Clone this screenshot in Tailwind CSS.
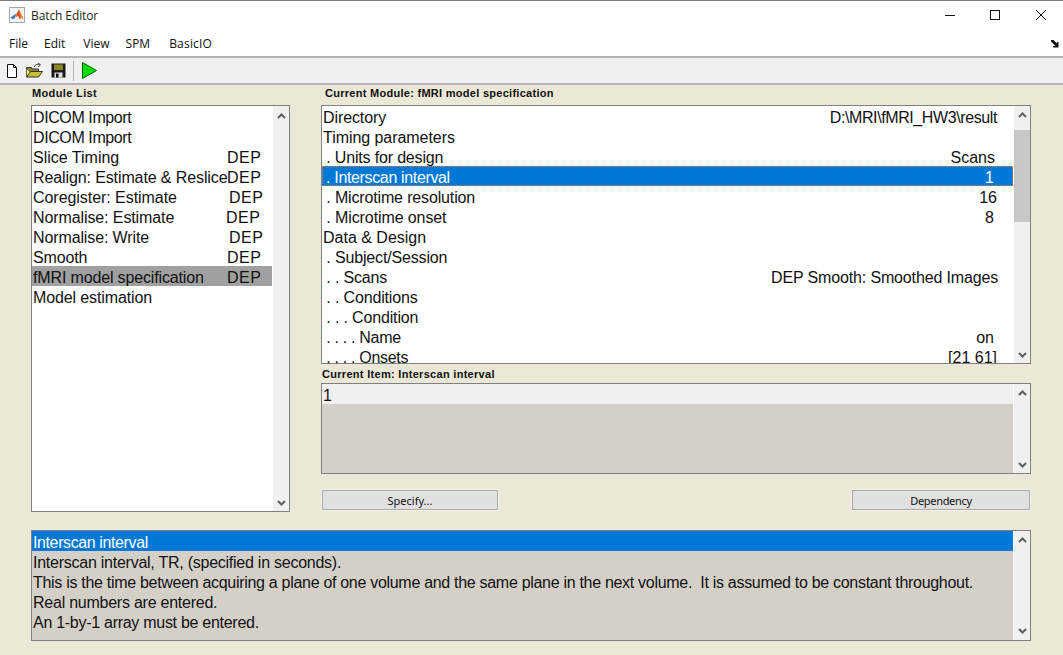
<!DOCTYPE html>
<html><head><meta charset="utf-8"><title>Batch Editor</title>
<script src="https://cdn.jsdelivr.net/npm/@tailwindcss/browser@4"></script></head>
<body class="w-[1063px] h-[655px] overflow-hidden bg-[#ebe8d8] font-['Liberation_Sans',sans-serif] text-black">
<div class="flex flex-col h-[655px]">
  <!-- title bar -->
  <div class="h-[32px] bg-white border-t border-[#7a7a7a] flex items-center shrink-0 pb-[3px]">
    <svg class="ml-[9px] w-[16px] h-[16px]" viewBox="0 0 16 16"><rect x=".5" y=".5" width="15" height="15" fill="#f4f4f4" stroke="#a8a8a8"/><path d="M1.5 10.5L5 8l2.5-1.5L6 11l-2 1.5z" fill="#3f7fb8"/><path d="M7.5 6.5L10 2.5l1.5 3L14.5 12l-2.5-1.5-1 2-2-3.5-2 1z" fill="#d9531e"/><path d="M10 2.5l1.500 3L14.500 12 12 10.500z" fill="#f0a030"/></svg>
    <span class="ml-[6px] mt-[2px] text-[12px] font-['Open_Sans',sans-serif] text-[#222] tracking-[-0.1px]">Batch Editor</span>
    <div class="ml-auto flex items-center h-full">
      <svg class="w-[12px] h-[12px] mr-[33px]" viewBox="0 0 12 12"><path d="M1 6.500h10" stroke="#111" stroke-width="1"/></svg>
      <svg class="w-[12px] h-[12px] mr-[34px]" viewBox="0 0 12 12"><rect x="1.500" y="1.500" width="9" height="9" fill="none" stroke="#111"/></svg>
      <svg class="w-[12px] h-[12px] mr-[16px]" viewBox="0 0 12 12"><path d="M1 1l10 10M11 1L1 11" stroke="#111" stroke-width="1"/></svg>
    </div>
  </div>
  <!-- menu -->
  <div class="h-[26px] bg-white border-b-2 border-[#b4b4b4] flex items-center shrink-0 text-[12px] font-['Open_Sans',sans-serif] text-[#111]">
    <span class="ml-[9px]">File</span><span class="ml-[16px]">Edit</span><span class="ml-[18px]">View</span><span class="ml-[16px]">SPM</span><span class="ml-[19px] tracking-[0.2px]">BasicIO</span>
    <svg class="ml-auto mr-[3px] w-[9px] h-[8px]" viewBox="0 0 9 8"><path d="M0 0h2.500l3.500 3.500V2h1.500v5.500H2V6h2.500L0 1.500z" fill="#111"/></svg>
  </div>
  <!-- toolbar -->
  <div class="h-[27px] bg-[#f0f0f0] border-b-2 border-[#b4b4b4] flex items-center shrink-0">
    <svg class="ml-[6px] w-[12px] h-[14px]" viewBox="0 0 12 14"><path d="M1.500.5h6l3 3v10h-9z" fill="#fff" stroke="#111"/><path d="M7.500.5v3h3" fill="none" stroke="#111"/></svg>
    <svg class="ml-[8px] w-[17px] h-[15px]" viewBox="0 0 17 15"><path d="M.5 4.500h5l1 1.500h6v7.500H.5z" fill="#8a8a20" stroke="#333"/><path d="M.5 5.500l4 4L.5 13.500z" fill="#f8f08a" stroke="#333" stroke-width=".5"/><path d="M.5 14l4-5.500h12l-4 5.500z" fill="#c8c030" stroke="#333"/><path d="M8 4C9 1.500 11 1 13.500 1.500M12 0l2.500 1.700L12 4" fill="none" stroke="#444"/></svg>
    <svg class="ml-[8px] w-[15px] h-[15px]" viewBox="0 0 15 15"><rect x=".5" y=".5" width="14" height="14" fill="#1a1a1a"/><rect x="3" y="1.500" width="9" height="5.500" fill="#8a8a1e"/><rect x="3.500" y="9.500" width="8" height="5" fill="#e0e0e0"/><rect x="5" y="10.500" width="2.500" height="4" fill="#111"/></svg>
    <div class="ml-[7px] w-px h-[20px] bg-[#b8b8b8]"></div>
    <svg class="ml-[8px] w-[15px] h-[17px]" viewBox="0 0 15 17"><path d="M.5.500L14.500 8.500.5 16.500z" fill="#00e000" stroke="#006000"/></svg>
  </div>
  <!-- body -->
  <div class="flex-1 pl-[31px] flex flex-col">
    <div class="flex h-[428px]">
      <!-- left column -->
      <div class="w-[259px] shrink-0">
        <div class="h-[20px] pl-[1px] pt-[2px] text-[11px] leading-[12px] font-bold text-[#111] tracking-[0.36px]">Module List</div>
        <div class="h-[407px] flex bg-white border border-[#808080]">
          <div class="flex-1 text-[16px] leading-[24px] text-[#111] overflow-hidden whitespace-nowrap">
            <div class="flex h-[20px] pl-[1px]"><span class="tracking-[-0.4px]">DICOM Import</span></div>
            <div class="flex h-[20px] pl-[1px]"><span class="tracking-[-0.4px]">DICOM Import</span></div>
            <div class="flex h-[20px] pl-[1px]"><span class="w-[194px] shrink-0">Slice Timing</span><span class="tracking-[0.5px]">DEP</span></div>
            <div class="flex h-[20px] pl-[1px]"><span class="w-[194px] shrink-0 tracking-[-0.11px]">Realign: Estimate &amp; Reslice</span><span class="tracking-[0.5px]">DEP</span></div>
            <div class="flex h-[20px] pl-[1px]"><span class="w-[196px] shrink-0 tracking-[-0.05px]">Coregister: Estimate</span><span class="tracking-[0.5px]">DEP</span></div>
            <div class="flex h-[20px] pl-[1px]"><span class="w-[193px] shrink-0 tracking-[-0.1px]">Normalise: Estimate</span><span class="tracking-[0.5px]">DEP</span></div>
            <div class="flex h-[20px] pl-[1px]"><span class="w-[196px] shrink-0 tracking-[-0.12px]">Normalise: Write</span><span class="tracking-[0.5px]">DEP</span></div>
            <div class="flex h-[20px] pl-[1px]"><span class="w-[194px] shrink-0 tracking-[-0.15px]">Smooth</span><span class="tracking-[0.5px]">DEP</span></div>
            <div class="flex h-[20px] pl-[1px] bg-[#a0a0a0]"><span class="w-[194px] shrink-0 tracking-[-0.15px]">fMRI model specification</span><span class="tracking-[0.5px]">DEP</span></div>
            <div class="flex h-[20px] pl-[1px]"><span class="tracking-[-0.12px]">Model estimation</span></div>
          </div>
          <div class="w-[17px] bg-[#f0f0f0] flex flex-col justify-between items-center pt-[7px] pb-[5px] border-l border-white">
            <svg class="w-[9px] h-[6px]" viewBox="0 0 9 6"><path d="M1 5l3.500-3.500L8 5" fill="none" stroke="#606060" stroke-width="2"/></svg>
            <svg class="w-[9px] h-[6px]" viewBox="0 0 9 6"><path d="M1 1l3.500 3.500L8 1" fill="none" stroke="#606060" stroke-width="2"/></svg>
          </div>
        </div>
      </div>
      <!-- right column -->
      <div class="w-[710px] ml-[31px] shrink-0 flex flex-col">
        <div class="h-[20px] pl-[4px] pt-[2px] text-[11px] leading-[12px] font-bold text-[#111] tracking-[0.28px]">Current Module: fMRI model specification</div>
        <div class="h-[259px] flex bg-white border border-[#808080]">
          <div class="flex-1 text-[16px] leading-[24px] text-[#111] overflow-hidden whitespace-nowrap">
            <div class="flex justify-between h-[20px] pl-[1px] pr-[16px]"><span class="tracking-[-0.1px]">Directory</span><span class="tracking-[-0.4px]">D:\MRI\fMRI_HW3\result</span></div>
            <div class="flex justify-between h-[20px] pl-[1px]"><span class="tracking-[-0.05px]">Timing parameters</span></div>
            <div class="flex justify-between h-[20px] pr-[18px]"><span class="tracking-[-0.17px]">&nbsp;. Units for design</span><span>Scans</span></div>
            <div class="flex justify-between h-[20px] pr-[19px] bg-[#0078d7] text-white outline-1 outline-dotted outline-offset-[-1px] outline-[#e07a10]"><span class="tracking-[-0.35px]">&nbsp;. Interscan interval</span><span>1</span></div>
            <div class="flex justify-between h-[20px] pr-[16px]"><span class="tracking-[-0.15px]">&nbsp;. Microtime resolution</span><span>16</span></div>
            <div class="flex justify-between h-[20px] pr-[19px]"><span class="tracking-[-0.1px]">&nbsp;. Microtime onset</span><span>8</span></div>
            <div class="flex justify-between h-[20px] pl-[1px]"><span>Data &amp; Design</span></div>
            <div class="flex justify-between h-[20px]"><span class="tracking-[-0.15px]">&nbsp;. Subject/Session</span></div>
            <div class="flex justify-between h-[20px] pr-[15px]"><span class="tracking-[-0.15px]">&nbsp;. . Scans</span><span class="tracking-[-0.15px]">DEP Smooth: Smoothed Images</span></div>
            <div class="flex justify-between h-[20px]"><span class="tracking-[-0.15px]">&nbsp;. . Conditions</span></div>
            <div class="flex justify-between h-[20px]"><span class="tracking-[-0.15px]">&nbsp;. . . Condition</span></div>
            <div class="flex justify-between h-[20px] pr-[19px]"><span class="tracking-[-0.3px]">&nbsp;. . . . Name</span><span>on</span></div>
            <div class="flex justify-between h-[20px] pr-[16px]"><span class="tracking-[-0.3px]">&nbsp;. . . . Onsets</span><span>[21 61]</span></div>
          </div>
          <div class="w-[17px] bg-[#f0f0f0] flex flex-col items-center border-l border-white">
            <svg class="w-[9px] h-[6px] mt-[6px]" viewBox="0 0 9 6"><path d="M1 5l3.500-3.500L8 5" fill="none" stroke="#606060" stroke-width="2"/></svg>
            <div class="w-full h-[92px] bg-[#c8c8c8] mt-[12px]"></div>
            <svg class="w-[9px] h-[6px] mt-auto mb-[5px]" viewBox="0 0 9 6"><path d="M1 1l3.500 3.500L8 1" fill="none" stroke="#606060" stroke-width="2"/></svg>
          </div>
        </div>
        <div class="h-[19px] pl-[1px] pt-[4px] text-[11px] leading-[12px] font-bold text-[#111] tracking-[0.3px]">Current Item: Interscan interval</div>
        <div class="h-[91px] flex bg-[#d4d0c8] border border-[#808080]">
          <div class="flex-1"><div class="h-[20px] bg-[#f0f0f0] text-[16px] leading-[24px] text-[#111] pl-[1px]">1</div></div>
          <div class="w-[17px] bg-[#f0f0f0] flex flex-col justify-between items-center pt-[6px] pb-[5px] border-l border-white">
            <svg class="w-[9px] h-[6px]" viewBox="0 0 9 6"><path d="M1 5l3.500-3.500L8 5" fill="none" stroke="#606060" stroke-width="2"/></svg>
            <svg class="w-[9px] h-[6px]" viewBox="0 0 9 6"><path d="M1 1l3.500 3.500L8 1" fill="none" stroke="#606060" stroke-width="2"/></svg>
          </div>
        </div>
        <div class="flex justify-between mt-[16px] pl-[1px]">
          <div class="w-[176px] h-[20px] bg-[#e1e1e1] border border-[#a8a8a8] ring-1 ring-[#f6f4ec] text-[11px] leading-[20px] text-center text-[#111] font-['Noto_Sans',sans-serif]">Specify...</div>
          <div class="w-[178px] h-[20px] bg-[#e1e1e1] border border-[#a8a8a8] ring-1 ring-[#f6f4ec] text-[11px] leading-[20px] text-center text-[#111] font-['Noto_Sans',sans-serif] mr-[1px] tracking-[-0.3px]">Dependency</div>
        </div>
      </div>
    </div>
    <!-- bottom help -->
    <div class="h-[111px] w-[1000px] mt-[17px] flex bg-[#d4d0c8] border border-[#808080]">
      <div class="flex-1 text-[16px] leading-[24px] text-[#111] overflow-hidden whitespace-nowrap">
        <div class="h-[20px] bg-[#0078d7] text-white pl-[1px] tracking-[-0.39px]">Interscan interval</div>
        <div class="h-[20px] pl-[1px] tracking-[-0.25px]">Interscan interval, TR, (specified in seconds).</div>
        <div class="h-[20px] pl-[1px] whitespace-pre tracking-[-0.3px]">This is the time between acquiring a plane of one volume and the same plane in the next volume.  It is assumed to be constant throughout.</div>
        <div class="h-[20px] pl-[1px] tracking-[-0.24px]">Real numbers are entered.</div>
        <div class="h-[20px] pl-[1px] tracking-[-0.28px]">An 1-by-1 array must be entered.</div>
      </div>
      <div class="w-[17px] bg-[#f0f0f0] flex flex-col justify-between items-center pt-[6px] pb-[6px] border-l border-white">
        <svg class="w-[9px] h-[6px]" viewBox="0 0 9 6"><path d="M1 5l3.500-3.500L8 5" fill="none" stroke="#606060" stroke-width="2"/></svg>
        <svg class="w-[9px] h-[6px]" viewBox="0 0 9 6"><path d="M1 1l3.500 3.500L8 1" fill="none" stroke="#606060" stroke-width="2"/></svg>
      </div>
    </div>
  </div>
</div>
</body></html>
